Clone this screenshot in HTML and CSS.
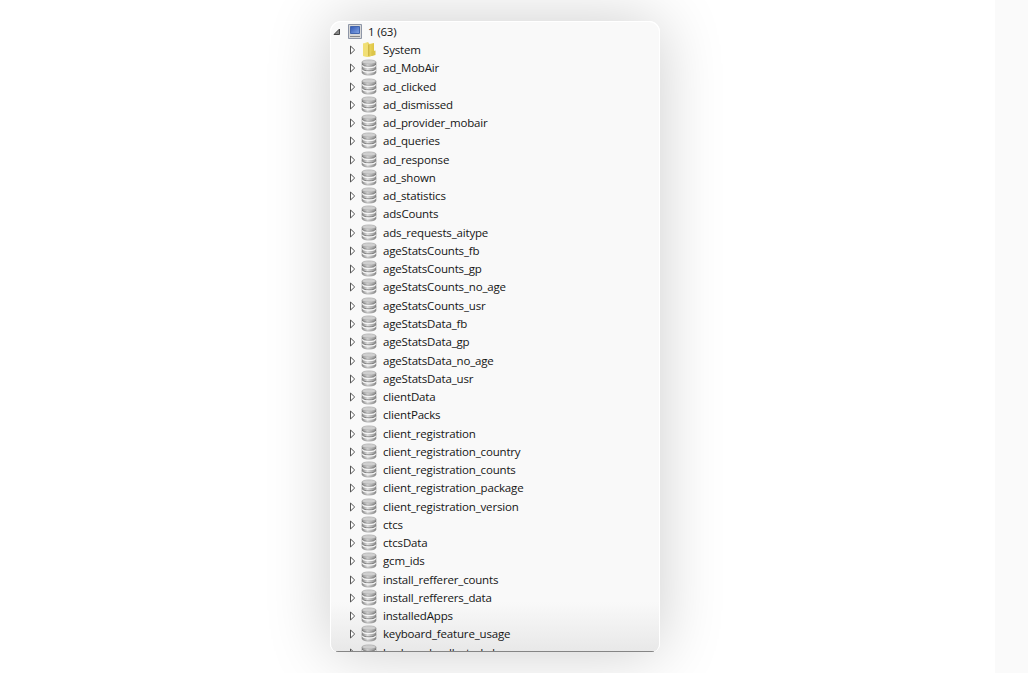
FILE: index.html
```
<!DOCTYPE html>
<html lang="en">
<head>
    <meta charset="UTF-8">
    <title>Databases</title>
    <link rel="stylesheet" href="styles.css">
</head>
<body>
    <svg class="symbols" aria-hidden="true">
        <defs>
            <linearGradient id="metal">
                <stop offset="0" stop-color="#858585"/>
                <stop offset=".4" stop-color="#e2e2e2"/>
                <stop offset="1" stop-color="#858585"/>
            </linearGradient>
            <linearGradient id="gold">
                <stop offset="0" stop-color="#f5e98f"/>
                <stop offset="1" stop-color="#dfc542"/>
            </linearGradient>
            <linearGradient id="screen" x2="1" y2="1">
                <stop offset="0" stop-color="#2f56b4"/>
                <stop offset="1" stop-color="#86a8e6"/>
            </linearGradient>
        </defs>
        <symbol id="arrow" viewBox="0 0 7 10">
            <path d="M1.5 1v8L5.7 5z" fill="#fff" stroke="#555"/>
        </symbol>
        <symbol id="database" viewBox="0 0 16 17">
            <path d="M1 3v10.5c0 3.4 14 3.4 14 0V3z" fill="url(#metal)" stroke="#8b8b8b" stroke-width=".6"/>
            <path d="M1.2 5c0 3 13.6 3 13.6 0M1.2 9.6c0 3 13.6 3 13.6 0" fill="none" stroke="#777" stroke-width=".8"/>
            <path d="M1.5 6.2c0 3 13 3 13 0M1.5 10.8c0 3 13 3 13 0" fill="none" stroke="#f6f6f6" stroke-width="1.2"/>
            <ellipse cx="8" cy="3" rx="7" ry="2.1" fill="#cfcfcf" stroke="#a0a0a0" stroke-width=".6"/>
        </symbol>
    </svg>

    <main class="page">
        <section class="panel">
            <div class="row root">
                <svg class="open-arrow" viewBox="0 0 8 8"><path d="M1 6.5h5.5V1z" fill="#888" stroke="#444"/></svg>
                <svg class="computer" viewBox="0 0 14 15">
                    <path d="M.5.5h13v14H.5z" fill="#d8d8d8" stroke="#8e96a7"/>
                    <path d="M2.5 2.5h9v7h-9z" fill="url(#screen)" stroke="#4466ad"/>
                    <path d="M2 12.5h10" stroke="#888"/>
                </svg>
                <span class="label">1 (63)</span>
            </div>
            <div class="row">
                <svg class="arrow"><use href="#arrow"/></svg>
                <svg class="icon" viewBox="0 0 16 17">
                    <path d="M2 2.5L7 1l1.5 2L13 2v12l-5 2-6-1z" fill="url(#gold)"/>
                    <path d="M2 2.5l5 1V16l-5-1z" fill="#f1df76"/>
                    <path d="M7.8 3.5V15" stroke="#c7ab38"/>
                    <path d="M10.5 10.5l4-1V14l-4 1z" fill="#dcc54a"/>
                </svg>
                <span class="label">System</span>
            </div>
            <div id="databases"></div>
        </section>
    </main>
    <aside class="side"></aside>
    <script src="script.js"></script>
</body>
</html>
```
FILE: styles.css
```
* {
    box-sizing: border-box;
}

body {
    margin: 0;
    display: flex;
    height: 673px;
    overflow: hidden;
    background: #fff;
    font-family: "Open Sans", "Noto Sans", sans-serif;
}

.symbols {
    position: absolute;
    width: 0;
    height: 0;
}

.page {
    width: 995px;
    padding: 21px 0 0 330px;
}

.side {
    flex: 1;
    background: #fafafa;
}

.panel {
    position: relative;
    width: 330px;
    height: 631px;
    padding-top: .6px;
    overflow: hidden;
    border: 1px solid #fff;
    border-bottom: 0;
    border-radius: 11px 11px 8px 8px;
    background: linear-gradient(#f9f9f9 calc(100% - 50px), #e8e8e8);
    box-shadow: 0 0 65px rgba(0, 0, 0, .2);
}

/* dark line on the bottom edge, short of the rounded corners */
.panel::after {
    content: '';
    position: absolute;
    left: 5px;
    right: 5px;
    bottom: 0;
    height: 1px;
    background: #858585;
}

.row {
    display: flex;
    align-items: center;
    height: 18.27px;
    padding-left: 18px;
}

.row.root {
    padding-left: 2px;
}

.arrow {
    width: 7px;
    height: 10px;
}

.open-arrow {
    width: 8px;
    height: 8px;
}

.computer {
    width: 14px;
    height: 15px;
    margin: 0 6px 0 7px;
}

.icon {
    width: 16px;
    height: 17px;
    margin: -1px 6px 0 5px;
}

.label {
    color: #151515;
    font-size: 11.5px;
    letter-spacing: -.17px;
    line-height: 18px;
    white-space: nowrap;
}
```
FILE: script.js
```
const names = [
    'ad_MobAir', 'ad_clicked', 'ad_dismissed', 'ad_provider_mobair',
    'ad_queries', 'ad_response', 'ad_shown', 'ad_statistics',
    'adsCounts', 'ads_requests_aitype', 'ageStatsCounts_fb',
    'ageStatsCounts_gp', 'ageStatsCounts_no_age', 'ageStatsCounts_usr',
    'ageStatsData_fb', 'ageStatsData_gp', 'ageStatsData_no_age',
    'ageStatsData_usr', 'clientData', 'clientPacks',
    'client_registration', 'client_registration_country',
    'client_registration_counts', 'client_registration_package',
    'client_registration_version', 'ctcs', 'ctcsData', 'gcm_ids',
    'install_refferer_counts', 'install_refferers_data',
    'installedApps', 'keyboard_feature_usage', 'keyboard_collected_d'
];

document.getElementById('databases').innerHTML = names.map(name => `
    <div class="row">
        <svg class="arrow"><use href="#arrow"/></svg>
        <svg class="icon"><use href="#database"/></svg>
        <span class="label">${name}</span>
    </div>`).join('');
```
